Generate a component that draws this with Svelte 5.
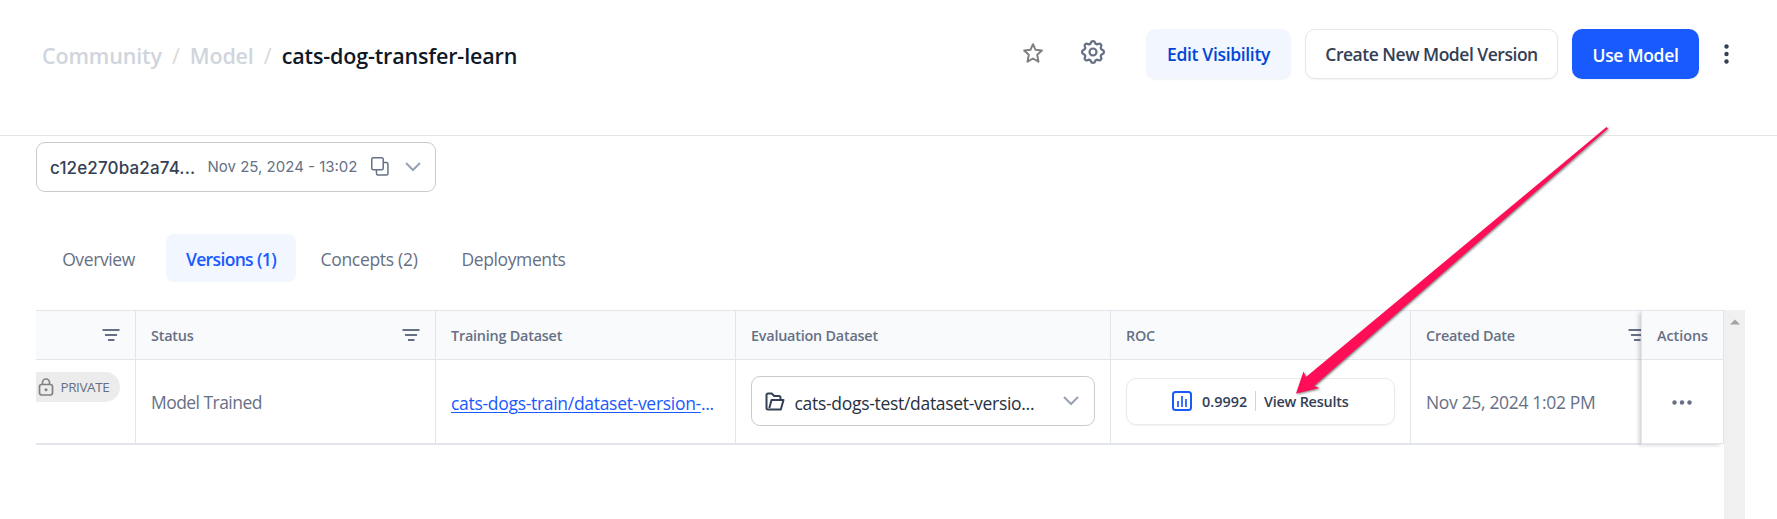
<script>
  const tabs = [
    { label: 'Overview', ls: -0.4 },
    { label: 'Versions (1)', ls: -0.65, active: true },
    { label: 'Concepts (2)', ls: -0.3 },
    { label: 'Deployments', ls: -0.4 }
  ];
</script>

{#snippet filter()}
  <svg class="filter" width="18" height="14" viewBox="0 0 18 14" fill="none" stroke="#667085" stroke-width="2">
    <path d="M.5 2h17M3 7h12M6 12h6.500" />
  </svg>
{/snippet}

{#snippet chevron()}
  <svg width="16" height="10" viewBox="0 0 16 10" fill="none" stroke="#98a2b3" stroke-width="2"><path d="M1 1l7 7 7-7" /></svg>
{/snippet}

<div class="page">
  <header>
    <nav>
      <a class="crumb" href="#community">Community</a><i>/</i>
      <a class="crumb" href="#model">Model</a><i>/</i>
      <span class="current">cats-dog-transfer-learn</span>
    </nav>
    <div class="tools">
      <svg class="star" width="24" height="24" viewBox="0 0 24 24" fill="none" stroke="#808080" stroke-width="2" stroke-linejoin="round">
        <path d="M12 3.200l2.550 5.600 6.350.750-4.700 4.250 1.300 6.900L12 17.500l-5.500 3.200 1.300-6.900L3.100 9.550l6.350-.750z" />
      </svg>
      <svg class="gear" width="26" height="26" viewBox="0.500 0.500 23 23" fill="none" stroke="#667085" stroke-width="1.900" stroke-linejoin="round">
        <circle cx="12" cy="12" r="3.100" />
        <path d="M10.300 3.300c.5-1.700 2.900-1.700 3.400 0 .3 1.200 1.600 1.700 2.600 1.100 1.600-.9 3.200.7 2.300 2.300-.6 1-.1 2.300 1.100 2.600 1.700.5 1.700 2.900 0 3.400-1.200.3-1.700 1.600-1.100 2.600.9 1.600-.7 3.200-2.300 2.300-1-.6-2.300-.1-2.600 1.100-.5 1.700-2.900 1.700-3.400 0-.3-1.200-1.600-1.700-2.600-1.100-1.600.9-3.200-.7-2.300-2.300.6-1 .1-2.300-1.100-2.600-1.700-.5-1.700-2.900 0-3.400 1.200-.3 1.700-1.600 1.100-2.600-.9-1.600.7-3.200 2.300-2.300 1 .6 2.300.1 2.600-1.100z" transform="translate(12 12) scale(1.080) translate(-12 -11)" />
      </svg>
      <button class="soft">Edit Visibility</button>
      <button class="outline">Create New Model Version</button>
      <button class="primary">Use Model</button>
      <svg class="more" width="5" height="20" viewBox="0 0 5 20" fill="#344054"><circle cx="2.500" cy="2.500" r="2.200" /><circle cx="2.500" cy="10" r="2.200" /><circle cx="2.500" cy="17.500" r="2.200" /></svg>
    </div>
  </header>

  <div class="version">
    <span class="hash">c12e270ba2a74...</span>
    <span class="when">Nov 25, 2024 - 13:02</span>
    <svg class="copy" width="18" height="19" viewBox="0 0 18 19" fill="none" stroke="#667085" stroke-width="1.500">
      <rect x=".75" y=".75" width="11.500" height="12" rx="1.500" />
      <path d="M12.250 5.500h3.250a1.500 1.500 0 0 1 1.500 1.500v9.500a1.500 1.500 0 0 1-1.500 1.500H7a1.500 1.500 0 0 1-1.500-1.500v-3.750" />
    </svg>
    {@render chevron()}
  </div>

  <div class="tabs">
    {#each tabs as tab}
      <div class="tab" class:active={tab.active} style="letter-spacing:{tab.ls}px">{tab.label}</div>
    {/each}
  </div>

  <div class="tablewrap">
    <div class="grid">
      <div class="th first">{@render filter()}</div>
      <div class="th">Status{@render filter()}</div>
      <div class="th">Training Dataset</div>
      <div class="th">Evaluation Dataset</div>
      <div class="th">ROC</div>
      <div class="th last">Created Date{@render filter()}</div>

      <div class="td first">
        <div class="pill">
          <svg width="17" height="18" viewBox="0 0 17 18" fill="none" stroke="#808080" stroke-width="1.700">
            <rect x="1.500" y="6.500" width="13" height="10.500" rx="2.200" />
            <path d="M4.500 6.500V4.500a3.500 3.500 0 0 1 7 0v2" />
            <circle cx="8" cy="11.700" r="1.500" fill="#808080" stroke="none" />
          </svg>
          PRIVATE
        </div>
      </div>
      <div class="td trained">Model Trained</div>
      <div class="td link"><span><u>cats-dogs-train/dataset-version-</u>...</span></div>
      <div class="td">
        <div class="select">
          <svg width="20" height="19" viewBox="0 0 20 19" fill="none" stroke="#344054" stroke-width="2" stroke-linejoin="round">
            <path d="M3.500 17.500H3A1.500 1.500 0 0 1 1.500 16V3A1.500 1.500 0 0 1 3 1.500h3.700L9.200 4H14a1.500 1.500 0 0 1 1.500 1.500V8" />
            <path d="M3.200 17.500h12.600L18.500 8H6.500L4.300 16" />
          </svg>
          <span>cats-dogs-test/dataset-versio...</span>
          {@render chevron()}
        </div>
      </div>
      <div class="td">
        <div class="roc">
          <svg width="20" height="20" viewBox="0 0 20 20" fill="none" stroke="#195aff" stroke-width="2">
            <rect x="1" y="1" width="18" height="18" rx="2.500" />
            <path d="M6 10v6M10 5v11M14 8v8" stroke-width="1.700" />
          </svg>
          <b>0.9992</b><em></em><span>View Results</span>
        </div>
      </div>
      <div class="td last">Nov 25, 2024 1:02 PM</div>
    </div>
    <div class="actions">
      <div class="ahead">Actions</div>
      <div class="abody">
        <svg width="20" height="5" viewBox="0 0 20 5" fill="#667085"><circle cx="2.500" cy="2.500" r="2.200" /><circle cx="10" cy="2.500" r="2.200" /><circle cx="17.500" cy="2.500" r="2.200" /></svg>
      </div>
    </div>
    <div class="scroll"><svg width="10" height="6" viewBox="0 0 10 6"><path d="M0 5.500L5 .5l5 5z" fill="#a3a3a3" /></svg></div>
  </div>

  <svg class="arrow" width="340" height="290" viewBox="1280 120 340 290">
    <path d="M1296 393.500L1303.500 371.500L1306 377L1606.500 127L1608 128.500L1314 386L1319.500 388z" fill="#ff0d57" />
  </svg>
</div>

<style>
  :global(body) { background: #fff; overflow: hidden; }
  * { box-sizing: border-box; }
  .page { position: relative; height: 519px; overflow: hidden; display: flex; flex-direction: column; font-family: 'Open Sans', 'Noto Sans', sans-serif; color: #667085; }
  header { height: 136px; flex: none; border-bottom: 1px solid #e5e5e5; display: flex; justify-content: space-between; align-items: flex-start; padding: 29px 48px 0 42px; }
  nav { display: flex; height: 52px; align-items: center; font-size: 21.500px; font-weight: 600; letter-spacing: -.15px; color: #101828; }
  .crumb { color: #d0d5dd; text-decoration: none; }
  nav i { font-style: normal; font-weight: 400; color: #d9d9d9; width: 28px; text-align: center; }
  .tools { display: flex; align-items: flex-start; }
  .star { margin: 12px 35px 0 0; }
  .gear { margin: 10px 40px 0 0; }
  button { height: 50px; border-radius: 10px; border: 0; font: 600 17.500px 'Open Sans', sans-serif; padding: 0; box-shadow: 0 1px 2px rgba(16, 24, 40, .06); white-space: nowrap; }
  .soft { width: 145px; margin-right: 14px; background: #f1f6ff; color: #0047d6; letter-spacing: -.33px; }
  .outline { width: 253px; margin-right: 14px; background: #fff; border: 1px solid #e4e7ec; color: #344054; letter-spacing: -.48px; }
  .primary { width: 127px; background: #195aff; color: #fff; letter-spacing: -.3px; padding-top: 1px; }
  .more { margin: 15px 0 0 25px; }

  .version { margin: 6px 0 0 36px; width: 400px; height: 50px; flex: none; border: 1px solid #c9cbce; border-radius: 9px; display: flex; align-items: center; padding: 0 14px 0 13px; font-family: Inter, sans-serif; white-space: nowrap; }
  .hash { width: 158px; font-size: 17px; font-weight: 500; letter-spacing: .15px; color: #344054; padding-top: 2px; }
  .when { font-size: 15px; width: 164px; margin-top: -1px; }
  .copy { margin: -1px 16px 0 0; }

  .tabs { display: flex; margin: 42px 0 0 36px; height: 48px; flex: none; font-size: 17.500px; }
  .tab { height: 48px; border-radius: 8px; display: flex; align-items: center; justify-content: center; padding-top: 2px; width: 130px; white-space: nowrap; }
  .tab:nth-child(1) { width: 125px; margin-right: 5px; }
  .tab:nth-child(3) { width: 146px; }
  .tab:nth-child(4) { width: 143px; }
  .active { background: #f1f6ff; color: #195aff; font-weight: 600; }

  .tablewrap { display: flex; margin: 28px 0 0 36px; width: 1709px; height: 209px; flex: none; }
  .grid { width: 1605px; height: 135px; overflow: hidden; display: grid; grid-template-columns: 100px 300px 300px 375px 300px 230px; grid-template-rows: 50px 85px; }
  .th { border: 1px solid #e2e6ea; border-width: 1px 1px 1px 0; background: #f9fafc; font-size: 14.400px; font-weight: 600; letter-spacing: -.22px; display: flex; align-items: center; padding: 1px 15px 0 15px; }
  .filter { margin-left: auto; margin-top: -2px; }
  .td { border-right: 1px solid #e2e6ea; border-bottom: 2px solid #e2e6ea; font-size: 17.500px; letter-spacing: -.33px; display: flex; align-items: center; padding: 1px 14px 0 15px; white-space: nowrap; }
  .last { border-right: 0; padding-right: 0; }
  .last .filter { margin-right: -5px; }
  .first { padding-left: 0; }
  .pill { width: 84px; height: 30px; margin-top: -30px; background: #ececec; border-radius: 0 15px 15px 0; font-size: 13.500px; letter-spacing: -.42px; display: flex; align-items: center; gap: 6px; padding-left: 1.500px; }
  .trained { letter-spacing: -.55px; }
  .link { color: #195aff; letter-spacing: -.3px; padding-top: 3px; }
  .link u { text-underline-offset: 2px; text-decoration-thickness: 1px; }
  .select { width: 344px; height: 50px; flex: none; margin-top: -2px; border: 1px solid #c9cbce; border-radius: 9px; display: flex; align-items: center; padding: 0 15px 0 13px; color: #27303f; }
  .select span { padding: 3px 0 0 9.500px; flex: 1; letter-spacing: -.3px; }
  .roc { width: 269px; height: 47px; margin-top: -2px; border: 1px solid #e8eaee; border-radius: 10px; box-shadow: 0 1px 2px rgba(16, 24, 40, .05); display: flex; align-items: center; padding-left: 45px; font-size: 14.400px; letter-spacing: -.2px; font-weight: 600; color: #344054; }
  .roc b { font-weight: 600; margin-left: 10px; letter-spacing: .05px; }
  .roc em { width: 1px; height: 20px; background: #d0d5dd; margin: 0 8px 0 7.500px; }
  .actions { width: 83px; height: 134px; flex: none; position: relative; border: 1px solid #e2e6ea; background: #fff; box-shadow: -3px 2px 4px -1px rgba(40, 40, 60, .22); }
  .ahead { height: 49px; background: #f9fafc; border-bottom: 1px solid #e2e6ea; display: flex; align-items: center; justify-content: center; font-size: 14.400px; letter-spacing: -.05px; font-weight: 600; }
  .abody { height: 84px; display: flex; align-items: center; justify-content: center; padding: 1px 1px 0 0; }
  .scroll { width: 21px; background: #f0f0f0; display: flex; justify-content: center; padding-top: 9px; }
  .arrow { position: absolute; left: 1280px; top: 120px; filter: drop-shadow(1.500px 1.500px 1.300px rgba(0, 0, 0, .5)); }
</style>
